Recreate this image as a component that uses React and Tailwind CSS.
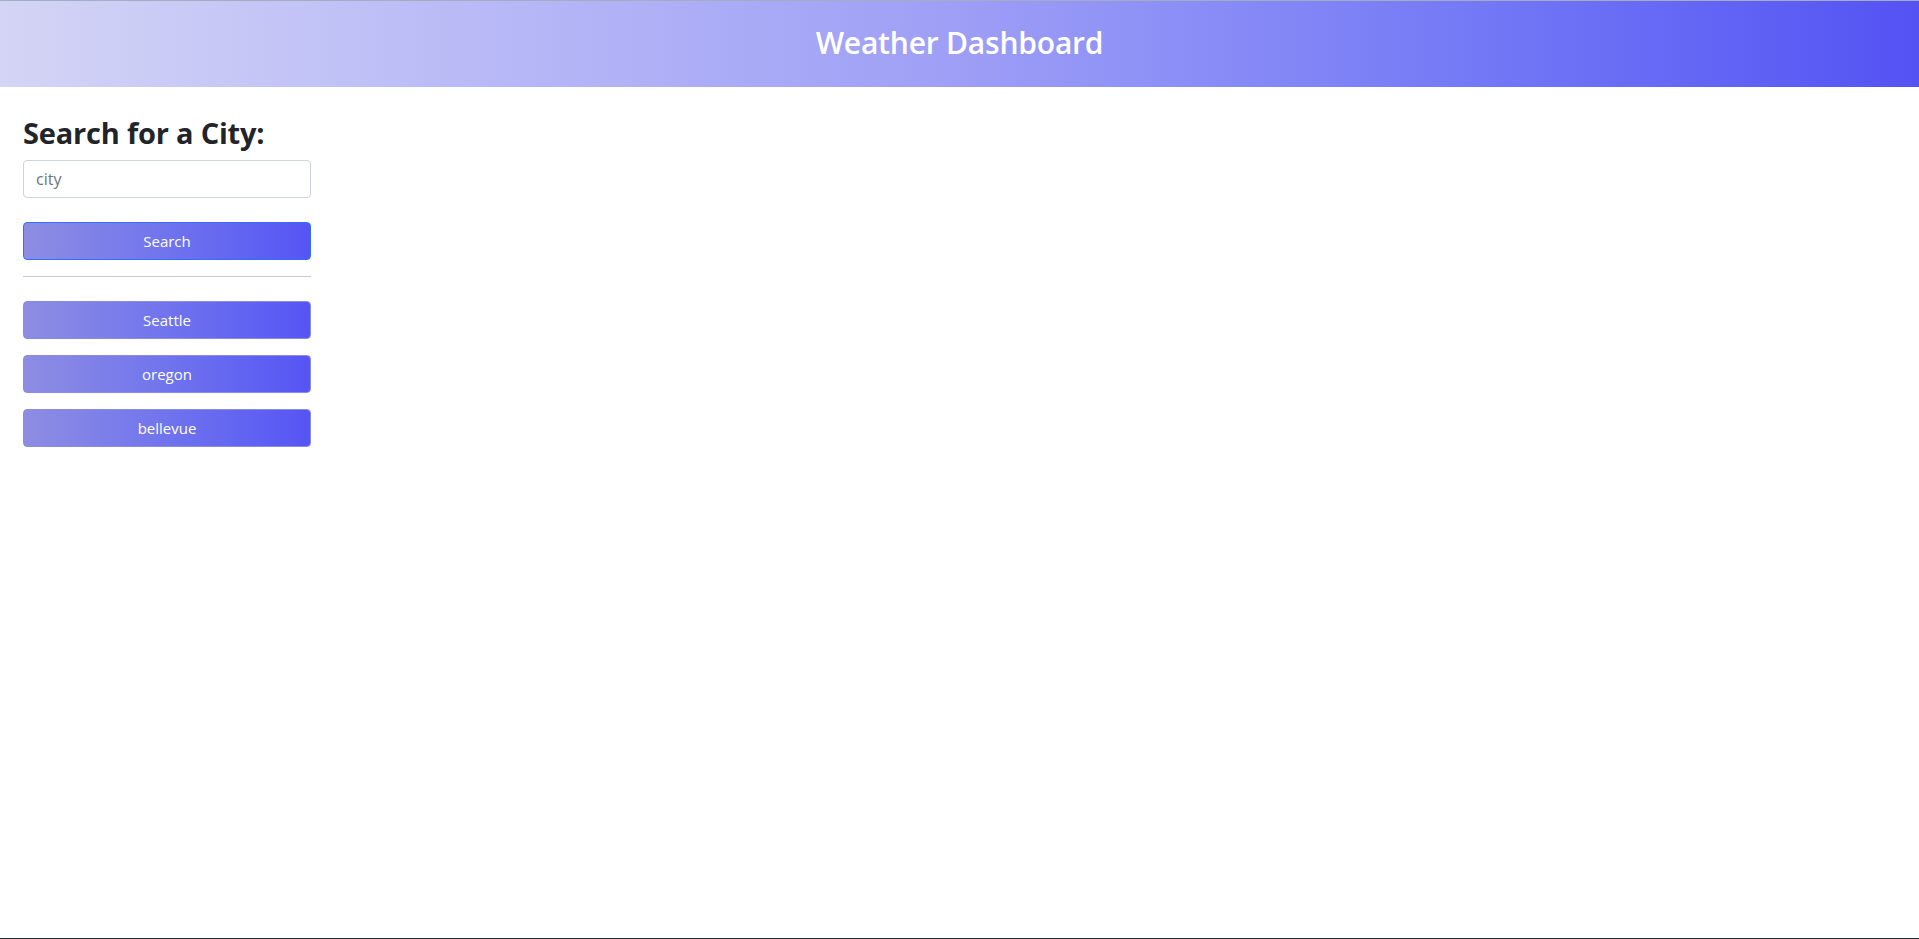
const cities = ['Seattle', 'oregon', 'bellevue'];

const App = () => {
  return (
    <div className="flex h-screen flex-col bg-white" style={{ fontFamily: '"Open Sans", "Noto Sans", sans-serif' }}>
      <header className="flex h-[87px] items-center justify-center border-t border-[#a3acc2] bg-gradient-to-r from-[#d4d4f5] via-[#9e9ef6] to-[#5452f3] pb-[4px]">
        <h1 className="text-[30px] font-semibold tracking-[-0.2px] text-white">Weather Dashboard</h1>
      </header>

      <main className="flex-1">
        <div className="ml-[23px] mt-[27px] w-[288px]">
          <h3 className="text-[29px] font-bold leading-[38px] tracking-[-0.2px] text-[#212529]">Search for a City:</h3>
          <input
            type="text"
            placeholder="city"
            className="mt-[8px] h-[38px] w-full rounded border border-[#ced4da] px-3 text-[16px] text-[#212529] placeholder:text-[#6c757d] focus:outline-none"
          />
          <button className="mt-[24px] h-[38px] w-full rounded border border-[#2f6ffa] bg-gradient-to-r from-[#8e8de3] to-[#5654f5] text-[15px] text-white">
            Search
          </button>
          <hr className="mt-[16px] border-t border-[#cccccc]" />

          <div className="mt-[24px] flex flex-col gap-[16px]">
            {cities.map((c) => (
              <button
                key={c}
                className="h-[38px] w-full rounded border border-[#8b8be4] bg-gradient-to-r from-[#8e8de3] to-[#5654f5] text-[15px] text-white"
              >
                {c}
              </button>
            ))}
          </div>
        </div>
      </main>

      <div className="h-px bg-[#1e2b30]" />
    </div>
  );
};

export default App;
